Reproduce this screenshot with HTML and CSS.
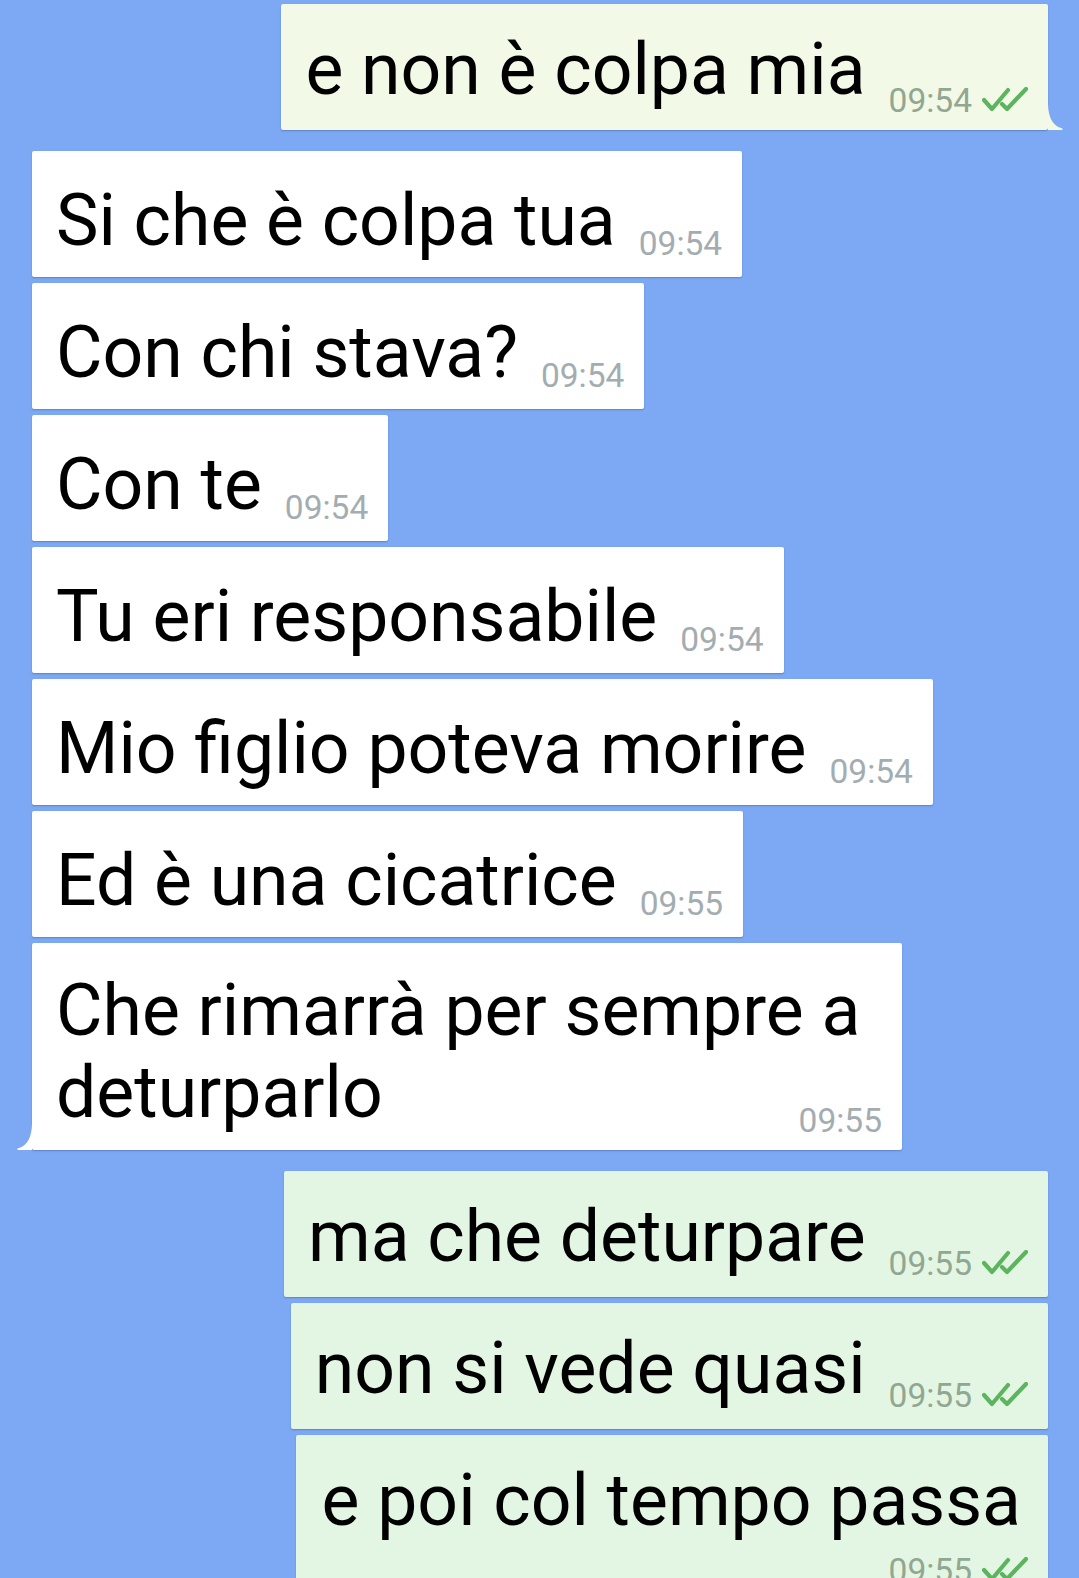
FILE: index.html
```html
<!DOCTYPE html>
<html lang="it">
<head>
<meta charset="utf-8">
<title>Chat</title>
<link rel="stylesheet" href="styles.css">
</head>
<body>
<div class="chat">
  <div class="bubble out first-out">
    <span class="txt">e non è colpa mia</span>
    <span class="meta"><span class="time">09:54</span><svg class="ticks" viewBox="0 0 46 25" width="46" height="25"><path d="M2 13 L10 22 L26 3"/><path d="M20 17 L25 22 L44 2"/></svg></span>
    <svg class="tail tail-right" viewBox="0 0 16 26" width="16" height="26"><path d="M0 0 C0.5 13 4 21 13 24 C15.5 24.8 15.5 26 13 26 L0 26 Z"/></svg>
  </div>

  <div class="bubble in grp"><span class="txt">Si che è colpa tua</span><span class="meta"><span class="time">09:54</span></span></div>
  <div class="bubble in"><span class="txt">Con chi stava?</span><span class="meta"><span class="time">09:54</span></span></div>
  <div class="bubble in"><span class="txt">Con te</span><span class="meta"><span class="time">09:54</span></span></div>
  <div class="bubble in"><span class="txt">Tu eri responsabile</span><span class="meta"><span class="time">09:54</span></span></div>
  <div class="bubble in"><span class="txt">Mio figlio poteva morire</span><span class="meta"><span class="time">09:54</span></span></div>
  <div class="bubble in"><span class="txt">Ed è una cicatrice</span><span class="meta"><span class="time">09:55</span></span></div>
  <div class="bubble in multi">
    <span class="txt">Che rimarrà per sempre a</span>
    <div class="lastrow"><span class="txt">deturparlo</span><span class="meta"><span class="time">09:55</span></span></div>
    <svg class="tail tail-left" viewBox="0 0 16 26" width="16" height="26"><path d="M16 0 C15.5 13 12 21 3 24 C0.5 24.8 0.5 26 3 26 L16 26 Z"/></svg>
  </div>

  <div class="bubble out grp"><span class="txt">ma che deturpare</span><span class="meta"><span class="time">09:55</span><svg class="ticks" viewBox="0 0 46 25" width="46" height="25"><path d="M2 13 L10 22 L26 3"/><path d="M20 17 L25 22 L44 2"/></svg></span></div>
  <div class="bubble out"><span class="txt">non si vede quasi</span><span class="meta"><span class="time">09:55</span><svg class="ticks" viewBox="0 0 46 25" width="46" height="25"><path d="M2 13 L10 22 L26 3"/><path d="M20 17 L25 22 L44 2"/></svg></span></div>
  <div class="bubble out stack"><span class="txt">e poi col tempo passa</span><span class="meta"><span class="time">09:55</span><svg class="ticks" viewBox="0 0 46 25" width="46" height="25"><path d="M2 13 L10 22 L26 3"/><path d="M20 17 L25 22 L44 2"/></svg></span></div>
</div>
</body>
</html>
```

FILE: styles.css
```css
html, body {
  margin: 0;
  padding: 0;
  background: #7ca8f4;
  height: 100%;
  overflow: hidden;
}

.chat {
  display: flex;
  flex-direction: column;
  padding: 4px 31px 0 32px;
  font-family: Roboto, "Noto Sans", "Liberation Sans", sans-serif;
  color: #000;
}

.bubble {
  position: relative;
  display: flex;
  align-items: flex-end;
  max-width: 960px;
  box-sizing: border-box;
  margin-top: 6px;
  border-radius: 2px;
  box-shadow: 0 1px 1.5px rgba(40, 60, 110, 0.35);
}

.bubble.grp { margin-top: 21px; }
.bubble.first-out { margin-top: 0; }

.bubble.in {
  align-self: flex-start;
  background: #ffffff;
  padding: 31px 20px 18px 24px;
}

.bubble.out {
  align-self: flex-end;
  background: #e3f6e3;
  padding: 27px 20px 22px 24px;
}

.bubble.first-out { background: #f2f9e6; }
.bubble.first-out .meta { margin-bottom: -8px; }

.txt {
  font-size: 71.5px;
  line-height: 77px;
  white-space: nowrap;
}

.meta {
  display: flex;
  align-items: flex-end;
  margin-left: 23px;
  flex-shrink: 0;
  white-space: nowrap;
}

.time {
  font-size: 33.5px;
  line-height: 30px;
}

.in .time { color: #a3adb1; }
.out .time { color: #92a791; }

.out .meta { margin-bottom: -4px; }

.ticks {
  display: block;
  margin-left: 10px;
  margin-bottom: 4px;
  fill: none;
  stroke: #5cb55e;
  stroke-width: 4.2;
  stroke-linecap: round;
  stroke-linejoin: round;
}

/* two-line message: time sits beside the last line */
.bubble.multi {
  display: block;
  width: 870px;
  padding-top: 27px;
  padding-bottom: 16px;
}

.bubble.multi .txt {
  display: block;
  line-height: 82px;
}

.lastrow {
  display: flex;
  align-items: flex-end;
  justify-content: space-between;
}

.lastrow .meta { margin-bottom: -2px; }

.bubble.stack {
  display: block;
  width: fit-content;
  padding-left: 26px;
  padding-right: 27px;
}

.bubble.stack .txt { display: block; }

.bubble.stack .meta {
  justify-content: flex-end;
  margin-left: 0;
  margin-right: -7px;
  margin-top: 17px;
}

.tail {
  position: absolute;
  bottom: 0;
}

.tail-right {
  left: 100%;
  fill: #f2f9e6;
}

.tail-left {
  right: 100%;
  fill: #ffffff;
}
```
